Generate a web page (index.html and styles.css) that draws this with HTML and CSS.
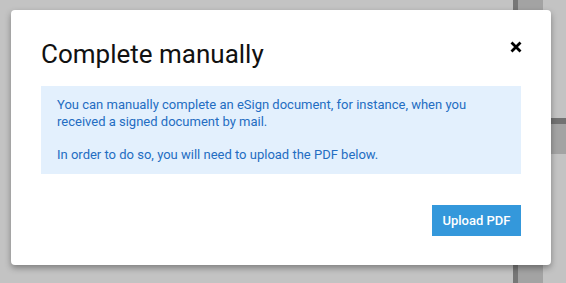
FILE: index.html
```html
<!DOCTYPE html>
<html>
<head>
<meta charset="utf-8">
<link rel="stylesheet" href="styles.css">
</head>
<body>
<div class="backdrop">
  <div class="bg-strip-dark"></div>
  <div class="bg-strip-mid"></div>
  <div class="bg-side"></div>
  <div class="modal">
    <div class="modal-header">
      <h1 class="modal-title">Complete manually</h1>
      <button class="close-btn" aria-label="Close">
        <svg width="12" height="12" viewBox="0 0 12 12"><path d="M1.5 1.5 L10.5 10.5 M10.5 1.5 L1.5 10.5" stroke="#000" stroke-width="2.8" stroke-linecap="butt"/></svg>
      </button>
    </div>
    <div class="info">
      You can manually complete an eSign document, for instance, when you received a signed document by mail.<br><br>In order to do so, you will need to upload the PDF below.
    </div>
    <div class="modal-footer">
      <button class="upload-btn">Upload PDF</button>
    </div>
  </div>
</div>
</body>
</html>
```
FILE: styles.css
```css
html, body {
  margin: 0;
  padding: 0;
  width: 566px;
  height: 283px;
  overflow: hidden;
  background: #c3c3c3;
  font-family: Roboto, "Liberation Sans", sans-serif;
}
.backdrop {
  position: relative;
  width: 566px;
  height: 283px;
  padding-top: 10px;
  box-sizing: border-box;
}
.bg-strip-dark {
  position: absolute;
  left: 513px;
  top: 0;
  width: 5px;
  height: 283px;
  background: #777;
}
.bg-strip-mid {
  position: absolute;
  left: 518px;
  top: 0;
  width: 25px;
  height: 283px;
  background: #a3a3a3;
}
.bg-side {
  position: absolute;
  left: 543px;
  top: 118px;
  width: 23px;
  height: 30px;
  background: #a3a3a3;
  border-top: 6px solid #727272;
}
.modal {
  position: relative;
  margin-left: 11px;
  width: 540px;
  height: 255px;
  box-sizing: border-box;
  background: #fff;
  border-radius: 4px;
  box-shadow: 0 3px 6px rgba(0,0,0,0.35);
  padding: 29px 30px 29px 30px;
  display: flex;
  flex-direction: column;
}
.modal-header {
  display: flex;
  align-items: flex-start;
  justify-content: space-between;
  height: 47px;
}
.modal-title {
  margin: 0;
  font-size: 26px;
  font-weight: 400;
  color: #111;
  line-height: 30px;
}
.close-btn {
  border: 0;
  background: none;
  padding: 0;
  margin-top: 2px;
  margin-right: -1px;
  width: 12px;
  height: 12px;
  display: flex;
}
.info {
  background: #e3f0fd;
  color: #236dc2;
  font-size: 13px;
  line-height: 16.5px;
  padding: 11px 16px 11px 16px;
}
.modal-footer {
  margin-top: auto;
  display: flex;
  justify-content: flex-end;
}
.upload-btn {
  border: 0;
  border-radius: 0;
  background: #3498db;
  color: #fff;
  font-family: Roboto, "Liberation Sans", sans-serif;
  font-weight: 500;
  font-size: 13px;
  width: 89px;
  height: 31px;
  padding: 0;
}
```
